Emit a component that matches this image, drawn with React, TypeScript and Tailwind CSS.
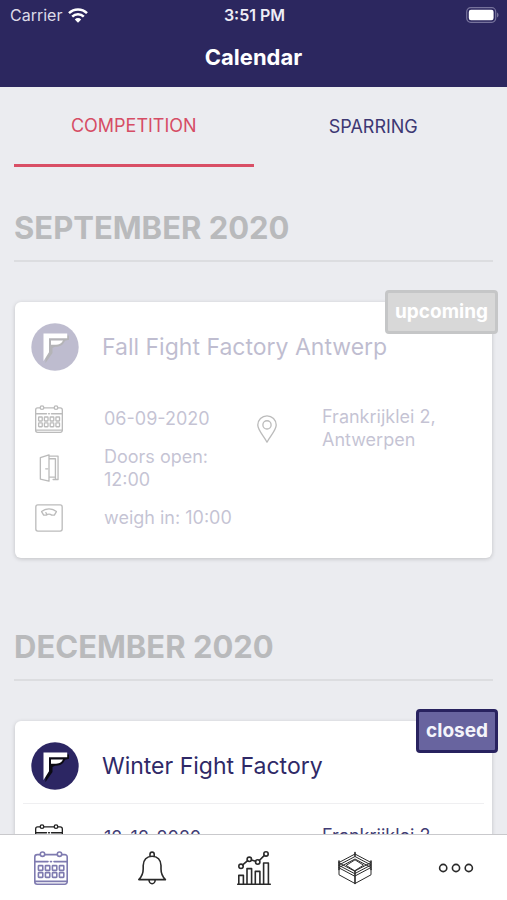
import type { ReactNode } from 'react';
import clsx from 'clsx';

interface FightEvent {
  title: string;
  status: 'upcoming' | 'closed';
  date: string;
  doors: string;
  weighIn: string;
  address: string;
  past?: boolean;
}

const months: { name: string; events: FightEvent[] }[] = [
  {
    name: 'SEPTEMBER 2020',
    events: [
      {
        title: 'Fall Fight Factory Antwerp',
        status: 'upcoming',
        date: '06-09-2020',
        doors: '12:00',
        weighIn: '10:00',
        address: 'Frankrijklei 2, Antwerpen',
        past: true,
      },
    ],
  },
  {
    name: 'DECEMBER 2020',
    events: [
      {
        title: 'Winter Fight Factory',
        status: 'closed',
        date: '12-12-2020',
        doors: '12:00',
        weighIn: '10:00',
        address: 'Frankrijklei 2, Antwerpen',
      },
    ],
  },
];

function Icon({ className, children }: { className: string; children: ReactNode }) {
  return (
    <svg
      viewBox="0 0 34 34"
      fill="none"
      stroke="currentColor"
      strokeWidth="1.6"
      strokeLinejoin="round"
      strokeLinecap="round"
      className={clsx('overflow-visible', className)}
      aria-hidden="true"
    >
      {children}
    </svg>
  );
}

function CalendarIcon({ className }: { className: string }) {
  return (
    <Icon className={className}>
      <path d="M6.3 3.6H3.2a2.4 2.4 0 0 0-2.4 2.4v24.8a2.4 2.4 0 0 0 2.4 2.4h27.6a2.4 2.4 0 0 0 2.4-2.4V6a2.4 2.4 0 0 0-2.4-2.4h-3.1M10.7 3.6h12.6" />
      <circle cx="8.5" cy="3.2" r="2.2" />
      <circle cx="25.5" cy="3.2" r="2.2" />
      <path d="M1 10.6h13M16.5 10.6h1M20 10.6h13M1 30.4h32" />
      {[14.6, 21.6].map((y) =>
        [4.4, 11.4, 18.4, 25.4].map((x) => (
          <rect key={`${x}-${y}`} x={x} y={y} width="4.4" height="4.8" rx="0.6" />
        ))
      )}
    </Icon>
  );
}

function DoorIcon({ className }: { className: string }) {
  return (
    <Icon className={className}>
      <path d="M6.5 4.5 17 1v32L6.5 30.5zM17 2.5h11v28.5h-3.2V5.8H17M17 28h7.8M24.8 31H22" />
      <path d="M13 18h2.5" />
    </Icon>
  );
}

function ScaleIcon({ className }: { className: string }) {
  return (
    <Icon className={className}>
      <rect x="1" y="1" width="32" height="32" rx="2.5" />
      <path d="M8 9.2c4.8-4.4 13.2-4.4 18 0l-2.5 4.3h-3.2c-1.8-1.3-4.8-1.3-6.6 0h-3.2zM14.5 13l-1.3-2.6" />
    </Icon>
  );
}

function PinIcon({ className }: { className: string }) {
  return (
    <Icon className={className}>
      <path d="M17 33C13.5 26 5.8 18.5 5.8 12.2a11.2 11.2 0 0 1 22.4 0C28.2 18.5 20.5 26 17 33z" />
      <circle cx="17" cy="12" r="5" />
    </Icon>
  );
}

function BellIcon({ className }: { className: string }) {
  return (
    <Icon className={className}>
      <path d="M15 5.5V3.2a2.1 2.1 0 0 1 4.2 0v2.3M3.8 28.6c3.2-3.2 4.4-6 4.4-10.6v-3.500c0-5.500 3.600-9.300 8.900-9.300s8.900 3.800 8.900 9.300V18c0 4.600 1.200 7.400 4.400 10.600zM14 28.800a3.100 4 0 0 0 6.200 0" />
    </Icon>
  );
}

function StatsIcon({ className }: { className: string }) {
  return (
    <Icon className={className}>
      <circle cx="4" cy="15.3" r="2.2" />
      <circle cx="12.3" cy="8.3" r="2.2" />
      <circle cx="20.7" cy="11" r="2.2" />
      <circle cx="29" cy="2.9" r="2.2" />
      <path d="M5.7 13.9l4.9-4.2M14.4 9l4.2 1.3M22.3 9.5l5.1-5.1" />
      <path d="M.7 33.2h32.6M1.8 33v-8.6h4.6V33M10 33V17.6h4.6V33M18.3 33V20.4h4.6V33M26.6 33V12h4.8v21" />
    </Icon>
  );
}

function RingIcon({ className }: { className: string }) {
  return (
    <Icon className={className}>
      <g strokeWidth="1">
        <path d="M1 11.5L17 3l16 8.5L17 20z" />
        <path d="M1 14l16-8.5L33 14l-16 8.500z" />
        <path d="M1 16.5L17 8l16 8.5L17 25z" />
        <path d="M8.5 14.2L17 8.8l8.5 5.4-8.5 5.4z" fill="white" />
        <path d="M1 18.5v5.3l16 8.7 16-8.7v-5.3" />
      </g>
      <path d="M1 10v8.5M33 10v8.5M17 1.5V5M17 20v12.5" />
    </Icon>
  );
}

function MoreIcon({ className }: { className: string }) {
  return (
    <Icon className={className}>
      <circle cx="4.2" cy="17" r="3.6" />
      <circle cx="17" cy="17" r="3.6" />
      <circle cx="29.8" cy="17" r="3.6" />
    </Icon>
  );
}

function Logo() {
  return (
    <svg viewBox="0 0 48 48" className="size-12 shrink-0" aria-hidden="true">
      <circle cx="24" cy="24" r="23.7" fill="#2c2663" />
      <path
        d="M14 12.5h24v4.3l-4 1c-2 4.5-5 6-10 6l-2.5 1.2v5L14.5 40z"
        fill="#0b0a14"
      />
      <path d="M12.5 10.5h23.7v4.7H18v14L12.5 38z" fill="white" />
      <path d="M20 17.5h12c-1.5 3-4 4.2-7 4.2h-5z" fill="white" />
    </svg>
  );
}

function StatusBar() {
  return (
    <div className="grid grid-cols-3 items-center h-[30px] pl-[10px] pr-2">
      <div className="flex items-center gap-[6px] text-base text-[#dcdae8]">
        Carrier
        <svg viewBox="0 0 20 15" className="w-5 h-[15px]" aria-label="Wi-Fi">
          <g fill="none" stroke="white" strokeWidth="2.5">
            <path d="M1 5.2a12.8 12.8 0 0 1 18 0" />
            <path d="M4.2 8.7a8.2 8.2 0 0 1 11.6 0" />
          </g>
          <path d="M10 14.8l-3.2-3.4a4.6 4.6 0 0 1 6.4 0z" fill="white" />
        </svg>
      </div>
      <div className="text-center text-base font-semibold text-[#eeedf5]">3:51 PM</div>
      <svg viewBox="0 0 33 16" className="w-[33px] h-4 justify-self-end" aria-label="Battery">
        <rect x="0.7" y="0.7" width="29" height="14.6" rx="4" fill="none" stroke="#77739c" strokeWidth="1.2" />
        <rect x="2.8" y="2.8" width="24.8" height="10.4" rx="2.2" fill="white" />
        <path d="M31 5.5c2 .8 2 4.2 0 5z" fill="#77739c" />
      </svg>
    </div>
  );
}

function EventCard({ event }: { event: FightEvent }) {
  return (
    <article className="relative mt-10 mx-px bg-white rounded-md shadow-[0_1px_4px_rgba(0,0,0,0.18)] px-2 pb-[29px]">
      <div className={clsx(event.past && 'opacity-30')}>
        <div
          className={clsx(
            'flex items-center gap-[23px] pt-[21px] pb-[13px] px-2 border-b',
            event.past ? 'border-transparent' : 'border-[#efeff1]'
          )}
        >
          <Logo />
          <h3 className="text-[23px] leading-8 text-[#2f2967]">{event.title}</h3>
        </div>
        <div className="flex pt-[22px] pl-3 pr-2 text-lg leading-[23px] text-[#413c74]">
          <ul className="w-[222px] space-y-[15px]">
            <li className="flex items-center gap-[41px]">
              <CalendarIcon className="size-7 -my-1 shrink-0 text-[#222]" />
              {event.date}
            </li>
            <li className="flex items-center gap-[41px]">
              <DoorIcon className="size-7 shrink-0 text-[#222]" />
              <span className="w-28">Doors open: {event.doors}</span>
            </li>
            <li className="flex items-center gap-[41px] whitespace-nowrap">
              <ScaleIcon className="size-7 -my-1 shrink-0 text-[#222]" />
              weigh in: {event.weighIn}
            </li>
          </ul>
          <div className="flex flex-1 items-start gap-[41px]">
            <PinIcon className="size-7 mt-2 -ml-1 shrink-0 text-[#222]" />
            <address className="w-32 not-italic -mt-[2px]">{event.address}</address>
          </div>
        </div>
      </div>
      <span
        className={clsx(
          'absolute -top-3 -right-[6px] px-[7px] border-3 rounded-sm text-[19px] leading-[38px] font-bold',
          event.past
            ? 'bg-[#d8d8d8] border-[#c5c6c7] text-white'
            : 'bg-[#68649f] border-[#28225f] text-[#f4f4fb]'
        )}
      >
        {event.status}
      </span>
    </article>
  );
}

const tabs = [
  { label: 'Calendar', icon: CalendarIcon, active: true },
  { label: 'Notifications', icon: BellIcon },
  { label: 'Statistics', icon: StatsIcon },
  { label: 'Clubs', icon: RingIcon },
  { label: 'More', icon: MoreIcon },
];

export default function App() {
  return (
    <div className="flex flex-col h-screen bg-[#ebecf0] font-['Inter',sans-serif]">
      <header className="shrink-0 h-[87px] bg-[#2c275f]">
        <StatusBar />
        <h1 className="text-center text-[22px] leading-[55px] font-bold text-white">Calendar</h1>
      </header>

      <main className="flex-1 min-h-0 overflow-y-auto [scrollbar-width:none] px-[14px]">
        <div role="tablist" className="grid grid-cols-2 text-lg">
          <button
            role="tab"
            aria-selected="true"
            className="h-20 border-b-3 border-[#d94f66] text-[#d64d65]"
          >
            COMPETITION
          </button>
          <button role="tab" aria-selected="false" className="h-20 text-[#3d3873]">
            SPARRING
          </button>
        </div>

        {months.map((month) => (
          <section key={month.name} className="pt-[41px] pb-7">
            <h2 className="pb-3 border-b-2 border-[#dcdde0] text-[31px] leading-10 font-bold text-[#b9babc]">
              {month.name}
            </h2>
            {month.events.map((event) => (
              <EventCard key={event.title} event={event} />
            ))}
          </section>
        ))}
      </main>

      <nav className="flex shrink-0 h-[66px] bg-white border-t border-[#c9c9cc]">
        {tabs.map(({ label, icon: TabIcon, active }) => (
          <button
            key={label}
            aria-label={label}
            className={clsx(
              'flex flex-1 items-center justify-center',
              active ? 'text-[#7f7bb0]' : 'text-[#2a2a2a]'
            )}
          >
            <TabIcon className="size-[34px]" />
          </button>
        ))}
      </nav>
    </div>
  );
}
